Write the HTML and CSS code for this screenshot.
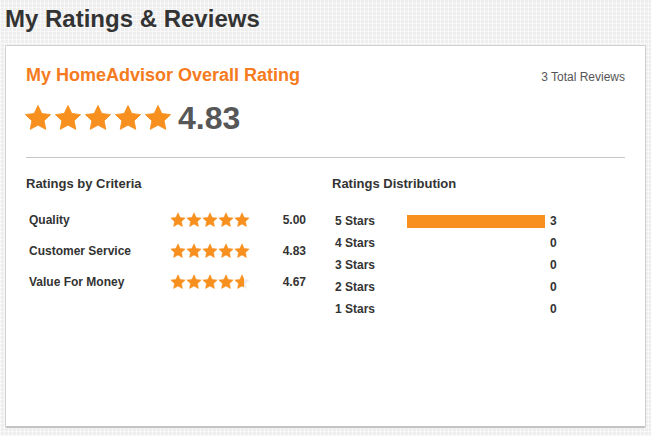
FILE: index.html
```html
<!DOCTYPE html>
<html>
<head>
<meta charset="utf-8">
<link rel="stylesheet" href="styles.css">
</head>
<body>
<svg width="0" height="0" class="defs">
  <defs>
    <symbol id="star" viewBox="0 0 24 24"><path d="M12 1.3L15.23 8.15L22.75 9.11L17.23 14.3L18.64 21.74L12 18.1L5.36 21.74L6.77 14.3L1.25 9.11L8.77 8.15Z"/></symbol>
    <linearGradient id="part"><stop offset="0.62" stop-color="#f7901e"/><stop offset="0.62" stop-color="#ececec"/></linearGradient>
  </defs>
</svg>
<h1 class="page-title">My Ratings &amp; Reviews</h1>
<div class="card">
  <div class="card-head">
    <h2 class="overall-title">My HomeAdvisor Overall Rating</h2>
    <span class="total">3 Total Reviews</span>
  </div>
  <div class="overall">
    <span class="stars big">
      <svg><use href="#star"/></svg><svg><use href="#star"/></svg><svg><use href="#star"/></svg><svg><use href="#star"/></svg><svg><use href="#star"/></svg>
    </span>
    <span class="score">4.83</span>
  </div>
  <hr class="divider">
  <div class="cols">
    <div class="col">
      <h3 class="col-title">Ratings by Criteria</h3>
      <div class="crit">
        <span class="crit-label">Quality</span>
        <span class="stars small"><svg><use href="#star"/></svg><svg><use href="#star"/></svg><svg><use href="#star"/></svg><svg><use href="#star"/></svg><svg><use href="#star"/></svg></span>
        <span class="crit-val">5.00</span>
      </div>
      <div class="crit">
        <span class="crit-label">Customer Service</span>
        <span class="stars small"><svg><use href="#star"/></svg><svg><use href="#star"/></svg><svg><use href="#star"/></svg><svg><use href="#star"/></svg><svg><use href="#star"/></svg></span>
        <span class="crit-val">4.83</span>
      </div>
      <div class="crit">
        <span class="crit-label">Value For Money</span>
        <span class="stars small"><svg><use href="#star"/></svg><svg><use href="#star"/></svg><svg><use href="#star"/></svg><svg><use href="#star"/></svg><svg class="partial"><use href="#star"/></svg></span>
        <span class="crit-val">4.67</span>
      </div>
    </div>
    <div class="col col-right">
      <h3 class="col-title">Ratings Distribution</h3>
      <div class="dist">
        <div class="dist-row"><span class="dist-label">5 Stars</span><span class="bar"><span class="bar-fill" style="width:100%"></span></span><span class="dist-count">3</span></div>
        <div class="dist-row"><span class="dist-label">4 Stars</span><span class="bar"><span class="bar-fill" style="width:0%"></span></span><span class="dist-count">0</span></div>
        <div class="dist-row"><span class="dist-label">3 Stars</span><span class="bar"><span class="bar-fill" style="width:0%"></span></span><span class="dist-count">0</span></div>
        <div class="dist-row"><span class="dist-label">2 Stars</span><span class="bar"><span class="bar-fill" style="width:0%"></span></span><span class="dist-count">0</span></div>
        <div class="dist-row"><span class="dist-label">1 Stars</span><span class="bar"><span class="bar-fill" style="width:0%"></span></span><span class="dist-count">0</span></div>
      </div>
    </div>
  </div>
</div>
</body>
</html>
```

FILE: styles.css
```css
html, body {
  margin: 0;
  padding: 0;
}
body {
  width: 651px;
  height: 436px;
  overflow: hidden;
  font-family: "Liberation Sans", Arial, sans-serif;
  color: #333;
  background-color: #eeeeee;
  background-image:
    repeating-linear-gradient(0deg, rgba(255,255,255,0.55) 0 1px, transparent 1px 4px),
    repeating-linear-gradient(90deg, rgba(255,255,255,0.55) 0 1px, transparent 1px 4px);
  padding: 0 5px;
  box-sizing: border-box;
}
.defs {
  position: absolute;
  width: 0;
  height: 0;
}
.page-title {
  margin: 0;
  padding-top: 4px;
  font-size: 24px;
  line-height: 30px;
  font-weight: bold;
  color: #333;
  height: 40px;
  box-sizing: border-box;
}
.card {
  background: #fff;
  border: 1px solid #d0d0d0;
  border-bottom: 2px solid #c4c4c4;
  border-radius: 2px;
  height: 383px;
  box-sizing: border-box;
  padding: 18px 20px 0 20px;
  margin-top: 5px;
}
.card-head {
  display: flex;
  justify-content: space-between;
  align-items: baseline;
}
.overall-title {
  margin: 0;
  font-size: 18px;
  line-height: 22px;
  font-weight: bold;
  color: #f47b20;
}
.total {
  font-size: 12px;
  color: #555;
}
.overall {
  display: flex;
  align-items: center;
  margin-top: 16px;
  height: 32px;
}
.stars {
  display: inline-flex;
  fill: #f7901e;
  stroke: #f7901e;
  stroke-width: 0.8;
  stroke-linejoin: round;
}
.stars.big {
  gap: 2px;
  margin-left: -2px;
}
.stars.big svg {
  width: 28px;
  height: 28px;
}
.score {
  margin-left: 6px;
  font-size: 32px;
  font-weight: bold;
  color: #575757;
  line-height: 32px;
}
.divider {
  border: 0;
  border-top: 1px solid #c8c8c8;
  margin: 23px 0 0 0;
}
.cols {
  display: flex;
  margin-top: 18px;
}
.col {
  width: 306px;
  flex-shrink: 0;
}
.col-right {
  flex: 1;
}
.col-title {
  margin: 0 0 12px 0;
  font-size: 13px;
  line-height: 16px;
  font-weight: bold;
  color: #333;
}
.crit {
  display: flex;
  align-items: center;
  width: 280px;
  height: 31px;
  padding-left: 3px;
  box-sizing: border-box;
  font-size: 12px;
  font-weight: bold;
  color: #333;
}
.crit-label {
  width: 141px;
}
.stars.small {
  gap: 0;
}
.stars.small svg {
  width: 16px;
  height: 16px;
}
.stars.small svg.partial {
  fill: url(#part);
  stroke: url(#part);
}
.crit-val {
  margin-left: auto;
  color: #333;
}
.dist {
  margin-top: 18px;
  padding-left: 3px;
}
.dist-row {
  display: flex;
  align-items: center;
  height: 22px;
  font-size: 12px;
  font-weight: bold;
  color: #333;
}
.dist-label {
  width: 72px;
}
.bar {
  width: 138px;
  height: 13px;
  display: flex;
}
.bar-fill {
  background: #f7901e;
  height: 100%;
}
.dist-count {
  margin-left: 5px;
}
```
